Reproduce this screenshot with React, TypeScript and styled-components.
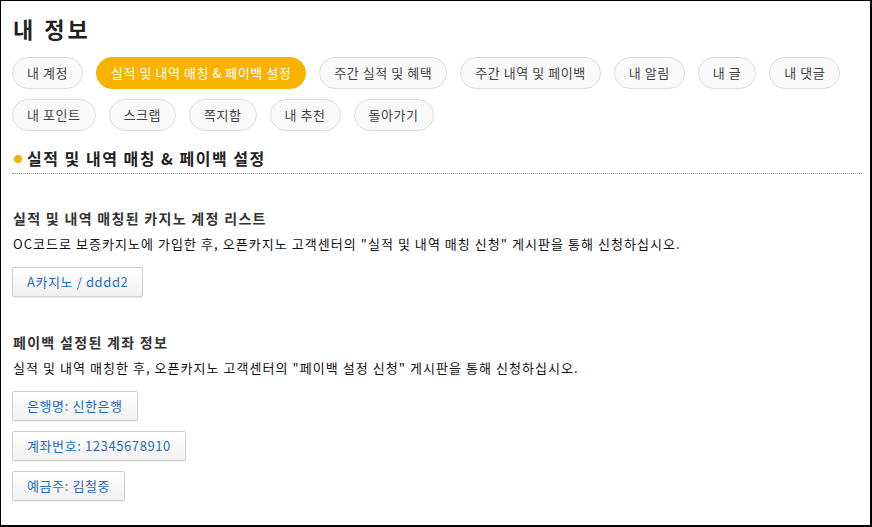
import React from "react";
import styled, { createGlobalStyle } from "styled-components";

const GlobalStyle = createGlobalStyle`
  html, body {
    margin: 0;
    padding: 0;
    background: #fff;
  }
  body {
    font-family: "Noto Sans CJK KR", "Noto Sans", sans-serif;
  }
`;

const Frame = styled.div`
  box-sizing: border-box;
  width: 872px;
  height: 527px;
  border-top: 1px solid #000;
  border-left: 1px solid #000;
  border-right: 2px solid #000;
  border-bottom: 2px solid #000;
  padding: 12px 8px 0 11px;
  overflow: hidden;
`;

const Title = styled.h1`
  margin: 0;
  font-size: 22px;
  font-weight: 700;
  line-height: 30px;
  letter-spacing: 3px;
  color: #222;
  padding-left: 1px;
`;

const Tabs = styled.div`
  display: flex;
  flex-wrap: wrap;
  gap: 10px 13px;
  margin-top: 14px;
  width: 840px;
`;

type PillProps = { $active?: boolean };
const Pill = styled.button<PillProps>`
  box-sizing: border-box;
  height: 32px;
  padding: 0 14px;
  border-radius: 16px;
  border: 1px solid ${({ $active }) => ($active ? "#f7b200" : "#dedede")};
  background: ${({ $active }) => ($active ? "#f8b300" : "#f9f9f9")};
  color: ${({ $active }) => ($active ? "#fff" : "#444")};
  font-family: inherit;
  font-size: 13px;
  letter-spacing: 0.55px;
  line-height: 30px;
  white-space: nowrap;
  cursor: pointer;
`;

const SectionHead = styled.div`
  display: flex;
  align-items: center;
  gap: 5px;
  margin-top: 15px;
  width: 850px;
  height: 24px;
  padding-bottom: 3px;
  border-bottom: 1px dotted #999;
  font-size: 16px;
  font-weight: 700;
  letter-spacing: 1.5px;
  color: #222;
`;

const Dot = styled.span`
  width: 8px;
  height: 8px;
  border-radius: 50%;
  background: #f8b300;
  margin-left: 2px;
  margin-top: 2px;
`;

const Block = styled.section<{ $top: number }>`
  margin-top: ${({ $top }) => $top}px;
  display: flex;
  flex-direction: column;
  align-items: flex-start;
`;

const SubTitle = styled.h3`
  margin: 0;
  font-size: 14px;
  font-weight: 700;
  line-height: 20px;
  letter-spacing: 1.3px;
  color: #333;
  padding-left: 1px;
`;

const Desc = styled.p`
  margin: 6px 0 0;
  font-size: 13px;
  line-height: 20px;
  letter-spacing: 1.05px;
  color: #111;
  padding-left: 1px;
`;

const InfoList = styled.div`
  display: flex;
  flex-direction: column;
  align-items: flex-start;
  gap: 10px;
  margin-top: 13px;
`;

const InfoButton = styled.button`
  box-sizing: border-box;
  height: 30px;
  padding: 0 14px;
  border: 1px solid #cfcfcf;
  border-radius: 2px;
  background: linear-gradient(#ffffff, #f1f1f1);
  box-shadow: 0 1px 1px rgba(0, 0, 0, 0.08);
  color: #1f6cbf;
  font-family: inherit;
  font-size: 13px;
  letter-spacing: 0.6px;
  line-height: 28px;
  white-space: nowrap;
  cursor: pointer;
`;

const tabs = [
  "내 계정",
  "실적 및 내역 매칭 & 페이백 설정",
  "주간 실적 및 혜택",
  "주간 내역 및 페이백",
  "내 알림",
  "내 글",
  "내 댓글",
  "내 포인트",
  "스크랩",
  "쪽지함",
  "내 추천",
  "돌아가기",
];

export default function App() {
  return (
    <>
      <GlobalStyle />
      <Frame>
        <Title>내 정보</Title>
        <Tabs>
          {tabs.map((t, i) => (
            <Pill key={t} $active={i === 1}>
              {t}
            </Pill>
          ))}
        </Tabs>
        <SectionHead>
          <Dot />
          실적 및 내역 매칭 &amp; 페이백 설정
        </SectionHead>
        <Block $top={34}>
          <SubTitle>실적 및 내역 매칭된 카지노 계정 리스트</SubTitle>
          <Desc>
            OC코드로 보증카지노에 가입한 후, 오픈카지노 고객센터의 "실적 및 내역 매칭 신청" 게시판을 통해 신청하십시오.
          </Desc>
          <InfoList>
            <InfoButton>A카지노 / dddd2</InfoButton>
          </InfoList>
        </Block>
        <Block $top={35}>
          <SubTitle>페이백 설정된 계좌 정보</SubTitle>
          <Desc>
            실적 및 내역 매칭한 후, 오픈카지노 고객센터의 "페이백 설정 신청" 게시판을 통해 신청하십시오.
          </Desc>
          <InfoList>
            <InfoButton>은행명: 신한은행</InfoButton>
            <InfoButton>계좌번호: 12345678910</InfoButton>
            <InfoButton>예금주: 김철중</InfoButton>
          </InfoList>
        </Block>
      </Frame>
    </>
  );
}
